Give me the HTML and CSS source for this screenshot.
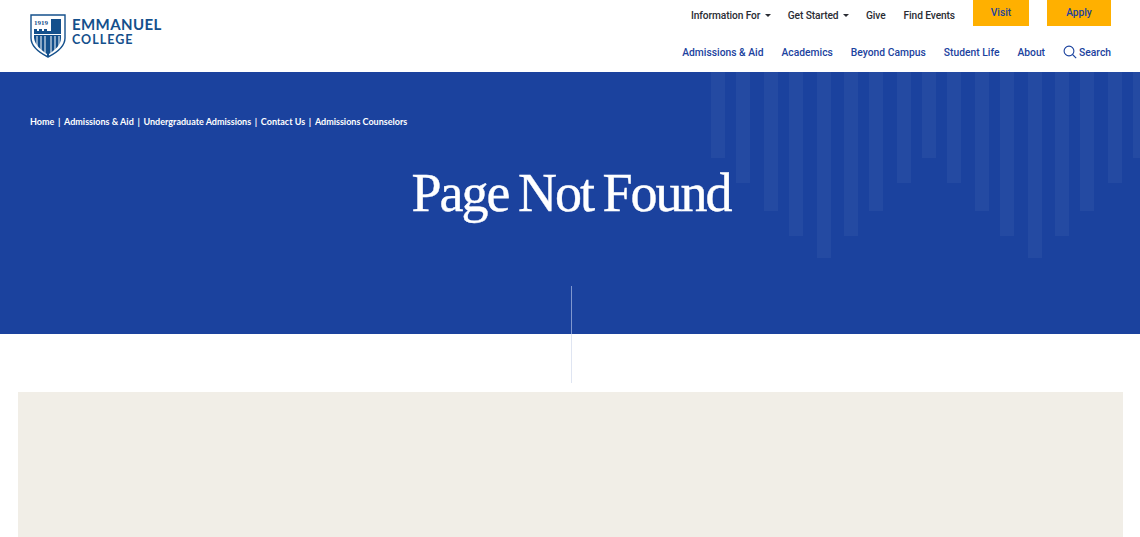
FILE: index.html
```html
<!DOCTYPE html>
<html lang="en">
<head>
<meta charset="utf-8">
<title>Page Not Found | Emmanuel College</title>
<link rel="stylesheet" href="styles.css">
</head>
<body>
<header class="site-header">
  <a class="brand" href="#">
    <svg class="crest" viewBox="0 0 36 44" width="36" height="44" aria-hidden="true">
      <path d="M1 1H35V24C35 33 26 39 18 43C10 39 1 33 1 24Z" fill="#fff" stroke="#14508c" stroke-width="1.400"/>
      <path d="M4 19V15H7V17H9V15H12V17H14V15H17V17H21V5H31V24C31 31 25 36 19 40V42H17V40C11 36 5 31 4 24Z" fill="#14508c"/>
      <path d="M7 22V33M11 22V36M15 22V39M21 22V39M25 22V36M29 22V33M4 20.500H31" stroke="#fff" stroke-width="1" fill="none"/>
      <text x="4" y="11" class="crest-year">1919</text>
    </svg>
    <span class="wordmark">
      <span class="wordmark-top">EMMANUEL</span>
      <span class="wordmark-bottom">COLLEGE</span>
    </span>
  </a>
  <div class="nav-stack">
    <nav class="utility-nav">
      <a class="utility-link" href="#">Information For<span class="caret"></span></a>
      <a class="utility-link" href="#">Get Started<span class="caret"></span></a>
      <a class="utility-link" href="#">Give</a>
      <a class="utility-link" href="#">Find Events</a>
      <a class="cta cta-visit" href="#">Visit</a>
      <a class="cta cta-apply" href="#">Apply</a>
    </nav>
    <nav class="main-nav">
      <a href="#">Admissions &amp; Aid</a>
      <a href="#">Academics</a>
      <a href="#">Beyond Campus</a>
      <a href="#">Student Life</a>
      <a href="#">About</a>
      <a class="search" href="#">
        <svg viewBox="0 0 14 14" width="14" height="14" aria-hidden="true"><circle cx="6" cy="6" r="4.900" fill="none" stroke="#1b429e" stroke-width="1.100"/><path d="M9.500 9.500L13.200 13.200" stroke="#1b429e" stroke-width="1.100"/></svg>
        Search
      </a>
    </nav>
  </div>
</header>
<section class="hero">
  <svg class="hero-bars" viewBox="0 0 436 186" width="436" height="186" aria-hidden="true">
    <rect x="0" width="14" height="86"/><rect x="25" width="14" height="111"/><rect x="53" width="14" height="139"/><rect x="78" width="14" height="164"/><rect x="106" width="14" height="186"/><rect x="133" width="14" height="164"/><rect x="158" width="14" height="139"/><rect x="186" width="14" height="111"/><rect x="211" width="14" height="86"/><rect x="236" width="14" height="111"/><rect x="264" width="14" height="139"/><rect x="289" width="14" height="164"/><rect x="317" width="14" height="186"/><rect x="344" width="14" height="164"/><rect x="369" width="14" height="139"/><rect x="397" width="14" height="111"/><rect x="422" width="14" height="86"/>
  </svg>
  <nav class="breadcrumbs">
    <a href="#">Home</a><span class="sep">|</span><a href="#">Admissions &amp; Aid</a><span class="sep">|</span><a href="#">Undergraduate Admissions</a><span class="sep">|</span><a href="#">Contact Us</a><span class="sep">|</span><a href="#">Admissions Counselors</a>
  </nav>
  <h1 class="title">Page Not Found</h1>
  <span class="rule rule-hero"></span>
</section>
<section class="after-hero">
  <span class="rule rule-white"></span>
  <div class="panel"></div>
</section>
</body>
</html>
```
FILE: styles.css
```css
* { box-sizing: border-box; }
html, body { margin: 0; padding: 0; background: #fff; }
body { font-family: "Roboto", "Liberation Sans", sans-serif; overflow: hidden; }
a { text-decoration: none; color: inherit; }

.site-header {
  height: 72px;
  display: flex;
  justify-content: space-between;
  padding: 0 29px 0 30px;
}
.brand { display: flex; align-items: flex-start; gap: 6px; padding-top: 14px; }
.crest { display: block; flex: none; }
.crest-year { font-family: "Liberation Serif", serif; font-size: 7px; font-weight: 700; fill: #14508c; }
.wordmark { display: flex; flex-direction: column; color: #14508c; font-family: "Lato", sans-serif; font-weight: 700; padding-top: 1px; }
.wordmark-top { font-size: 15px; line-height: 18px; letter-spacing: 0.4px; }
.wordmark-bottom { font-size: 12.500px; line-height: 14px; letter-spacing: 1px; }

.nav-stack { display: flex; flex-direction: column; align-items: flex-end; }
.utility-nav { display: flex; align-items: flex-start; height: 26px; font-size: 10.200px; color: #2a2c33; font-weight: 500; }
.utility-link { display: flex; align-items: center; height: 30px; margin-right: 18px; white-space: nowrap; letter-spacing: -0.1px; }
.caret { width: 0; height: 0; margin: 0 -1.500px 0 5px; border: 3px solid transparent; border-top: 3.500px solid #2a2c33; border-bottom: 0; }
.cta { display: block; height: 26px; line-height: 25px; text-align: center; background: #ffb000; color: #1b429e; }
.cta-visit { width: 56px; }
.cta-apply { width: 64px; margin-left: 18px; }

.main-nav { display: flex; align-items: center; height: 46px; padding-top: 6px; gap: 18px; font-size: 10.300px; font-weight: 500; color: #1b429e; white-space: nowrap; }
.search { display: flex; align-items: center; gap: 2px; }

.hero {
  position: relative;
  height: 262px;
  background: #1b429e;
  overflow: hidden;
  padding: 43px 30px 0;
}
.hero-bars { position: absolute; top: 0; left: 711px; fill: rgba(255, 255, 255, 0.045); }
.breadcrumbs { position: relative; display: flex; align-items: center; height: 12px; font-family: "Lato", sans-serif; font-size: 9px; font-weight: 700; color: #fff; white-space: nowrap; }
.sep { margin: 0 3.700px; }
.title {
  position: relative;
  margin: 35px 0 0;
  padding-left: 2px;
  text-align: center;
  font-family: "Liberation Serif", serif;
  font-weight: 400;
  font-size: 54px;
  line-height: 62px;
  letter-spacing: -2px;
  word-spacing: -2px;
  -webkit-text-stroke: 0.4px #fff;
  color: #fff;
}
.rule { position: absolute; left: 571px; width: 1px; }
.rule-hero { top: 214px; bottom: 0; background: #7f97cf; }
.after-hero { position: relative; height: 203px; padding: 58px 17px 0 18px; }
.rule-white { top: 0; height: 49px; background: #dfe5f2; }
.panel { height: 145px; background: #f1eee7; }
```
